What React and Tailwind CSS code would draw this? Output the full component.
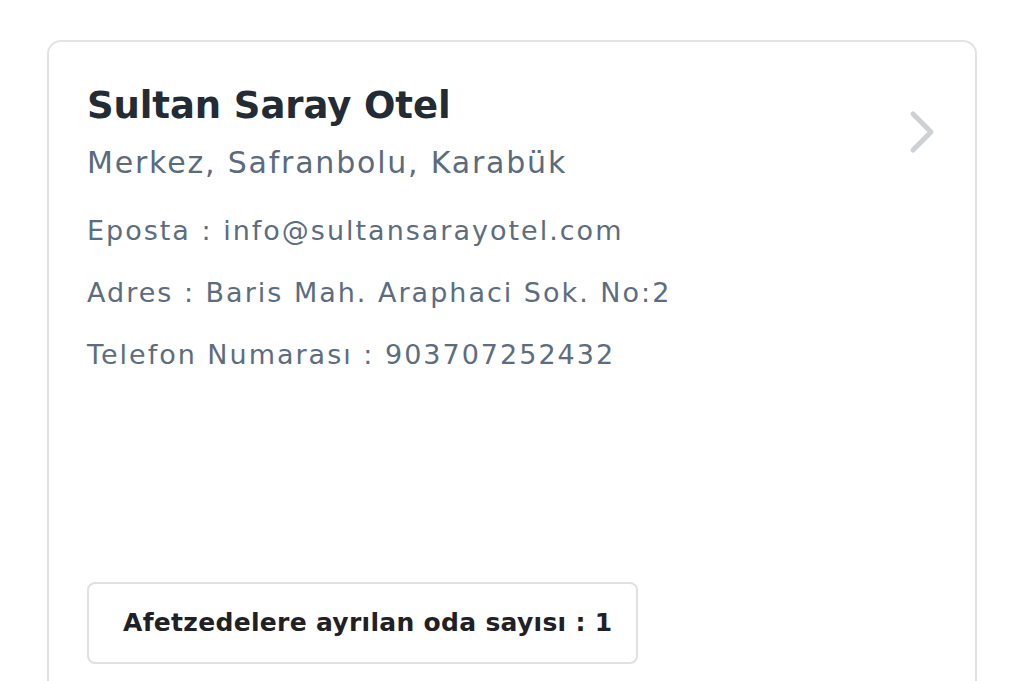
export default function App() {
  return (
    <div className="w-[1024px] h-[681px] overflow-hidden bg-white px-[47px] pt-[40px]" style={{ fontFamily: '"DejaVu Sans", sans-serif' }}>
      <div className="h-[700px] rounded-[14px] border-2 border-[#e2e3e5] px-[38px] pt-[40px] flex flex-col">
        <div className="flex items-start justify-between">
          <div>
            <h1 className="text-[37px] leading-[48px] font-bold tracking-[-0.1px] text-[#232c35]">Sultan Saray Otel</h1>
            <p className="mt-[13px] text-[30px] leading-[40px] tracking-[1.8px] text-[#5b6b7e]">Merkez, Safranbolu, Karabük</p>
          </div>
          <svg className="mt-[26px] mr-[-2px]" width="34" height="48" viewBox="0 0 34 48" fill="none">
            <path d="M8 6 L26 24 L8 42" stroke="#cdd1d6" strokeWidth="5" strokeLinecap="round" strokeLinejoin="round" />
          </svg>
        </div>
        <div className="mt-[28px] flex flex-col gap-[22px] text-[27px] leading-[40px] tracking-[2px] text-[#5d6d80]">
          <p>Eposta : info@sultansarayotel.com</p>
          <p>Adres : Baris Mah. Araphaci Sok. No:2</p>
          <p>Telefon Numarası : 903707252432</p>
        </div>
        <div className="mt-[207px] w-[551px] h-[82px] rounded-[8px] border-2 border-[#dfe0e2] flex items-center pl-[34px]">
          <span className="text-[25px] font-bold tracking-[0.3px] text-[#1f2124]">Afetzedelere ayrılan oda sayısı : 1</span>
        </div>
      </div>
    </div>
  );
}
